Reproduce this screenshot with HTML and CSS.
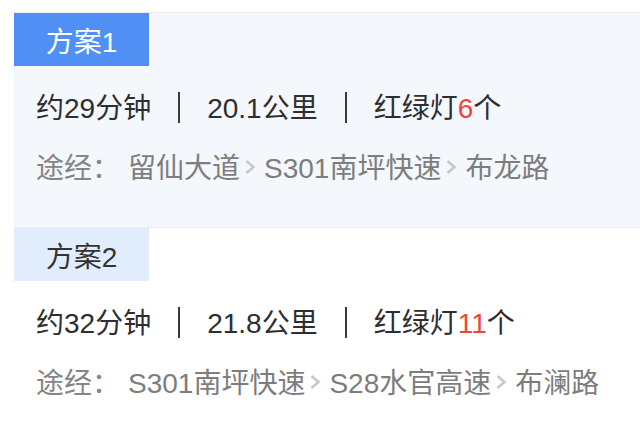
FILE: index.html
```html
<!DOCTYPE html>
<html lang="zh-CN">
<head>
<meta charset="utf-8">
<title>路线方案</title>
<link rel="stylesheet" href="styles.css">
</head>
<body>
<div class="plans">
  <section class="plan plan-active">
    <div class="tab">方案1</div>
    <div class="summary">
      <span>约29分钟</span><span class="sep"></span><span>20.1公里</span><span class="sep"></span><span>红绿灯<em class="num">6</em>个</span>
    </div>
    <div class="route">
      <span class="label">途经：</span>
      <span class="road">留仙大道</span><svg class="chev" viewBox="0 0 12 16" width="12" height="16"><polyline points="2.5,2 9.5,8 2.5,14" fill="none" stroke="#c8c8c8" stroke-width="2.6"/></svg><span class="road">S301南坪快速</span><svg class="chev" viewBox="0 0 12 16" width="12" height="16"><polyline points="2.5,2 9.5,8 2.5,14" fill="none" stroke="#c8c8c8" stroke-width="2.6"/></svg><span class="road">布龙路</span>
    </div>
  </section>
  <section class="plan">
    <div class="tab">方案2</div>
    <div class="summary">
      <span>约32分钟</span><span class="sep"></span><span>21.8公里</span><span class="sep"></span><span>红绿灯<em class="num">11</em>个</span>
    </div>
    <div class="route">
      <span class="label">途经：</span>
      <span class="road">S301南坪快速</span><svg class="chev" viewBox="0 0 12 16" width="12" height="16"><polyline points="2.5,2 9.5,8 2.5,14" fill="none" stroke="#c8c8c8" stroke-width="2.6"/></svg><span class="road">S28水官高速</span><svg class="chev" viewBox="0 0 12 16" width="12" height="16"><polyline points="2.5,2 9.5,8 2.5,14" fill="none" stroke="#c8c8c8" stroke-width="2.6"/></svg><span class="road">布澜路</span>
    </div>
  </section>
</div>
</body>
</html>
```

FILE: styles.css
```css
html, body {
  margin: 0;
  padding: 0;
  background: #ffffff;
}

body {
  font-family: "Liberation Sans", "Noto Sans CJK SC", sans-serif;
  font-size: 28px;
  color: #2e2e2e;
}

.plans {
  padding-top: 12px;
  padding-left: 14px;
}

.plan {
  border-top: 1px solid #eceef2;
  padding-bottom: 41px;
  background: #ffffff;
}

.plan-active {
  background: #f4f7fc;
}

.tab {
  width: 135px;
  height: 53px;
  display: flex;
  align-items: center;
  justify-content: center;
  background: #e1edfc;
  color: #333333;
  font-size: 28px;
}

.plan-active .tab {
  background: #5090f5;
  color: #ffffff;
}

.summary {
  display: flex;
  align-items: center;
  height: 40px;
  margin-top: 20px;
  padding-left: 22px;
  white-space: nowrap;
}

.sep {
  display: inline-block;
  width: 2px;
  height: 31px;
  background: #3a3a3a;
  margin: 3px 27px 0 27px;
}

.num {
  font-style: normal;
  color: #f0453d;
}

.route {
  display: flex;
  align-items: center;
  height: 40px;
  margin-top: 20px;
  padding-left: 22px;
  color: #7d7d7d;
  white-space: nowrap;
}

.label {
  color: #858585;
  margin-right: 8px;
}

.chev {
  display: block;
  margin: 2px 8px 0 4px;
}
```
